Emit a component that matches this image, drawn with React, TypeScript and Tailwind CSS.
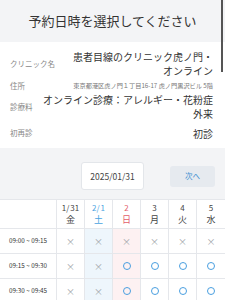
const font = { fontFamily: '"Noto Sans CJK JP", "Noto Sans", sans-serif' };

type Day = { m?: string; d: string; w: string; tone: 'plain' | 'sat' | 'sun' };

const days: Day[] = [
  { m: '1/', d: '31', w: '金', tone: 'plain' },
  { m: '2/', d: '1', w: '土', tone: 'sat' },
  { d: '2', w: '日', tone: 'sun' },
  { d: '3', w: '月', tone: 'plain' },
  { d: '4', w: '火', tone: 'plain' },
  { d: '5', w: '水', tone: 'plain' },
];

const slots = [
  { time: '09:00 ~ 09:15', marks: ['x', 'x', 'x', 'x', 'x', 'x'] },
  { time: '09:15 ~ 09:30', marks: ['x', 'x', 'o', 'o', 'o', 'o'] },
  { time: '09:30 ~ 09:45', marks: ['x', 'x', 'o', 'o', 'o', 'o'] },
];

const toneText = {
  plain: 'text-[#444]',
  sat: 'text-[#4aa3df]',
  sun: 'text-[#e35d6a]',
};

const toneBg = {
  plain: 'bg-white',
  sat: 'bg-[#eef6fc]',
  sun: 'bg-[#fdf1f2]',
};

const InfoRow = ({ label, h, children }: { label: string; h: string; children: React.ReactNode }) => (
  <div className={`flex items-center justify-between gap-1 ${h}`}>
    <span className="shrink-0 text-[7.5px] text-[#888]">{label}</span>
    <div className="text-right whitespace-nowrap">{children}</div>
  </div>
);

export default function App() {
  return (
    <div className="relative h-[300px] w-[225px] overflow-hidden bg-white" style={font}>
      {/* Header */}
      <div className="flex h-[42px] items-center justify-center bg-[#f3f4f6]">
        <h1 className="text-[13px] text-[#333]">予約日時を選択してください</h1>
      </div>

      {/* Clinic info */}
      <div className="px-[10px] pt-[5px] pb-[5px] pr-[12px]">
        <InfoRow label="クリニック名" h="h-[34px]">
          <p className="text-[10px] leading-[14px] text-[#333]">
            患者目線のクリニック虎ノ門・
            <br />
            オンライン
          </p>
        </InfoRow>
        <InfoRow label="住所" h="h-[10px]">
          <p className="text-[6.2px] text-[#777]">東京都港区虎ノ門１丁目16-17 虎ノ門黒沢ビル 5階</p>
        </InfoRow>
        <InfoRow label="診療料" h="h-[32px]">
          <p className="text-[10px] leading-[14px] text-[#333]">
            オンライン診療：アレルギー・花粉症
            <br />
            外来
          </p>
        </InfoRow>
        <InfoRow label="初再診" h="h-[20px]">
          <p className="text-[10px] text-[#333]">初診</p>
        </InfoRow>
      </div>

      {/* Date picker bar */}
      <div className="grid grid-cols-[1fr_auto_1fr] items-center bg-[#f3f4f6] pt-[14px] pb-[9px]">
        <div />
        <div className="flex h-[28px] w-[63px] items-center justify-center rounded-[3px] border border-[#e3e6ea] bg-white text-[8.5px] text-[#444]">
          2025/01/31
        </div>
        <button className="mr-[10px] flex h-[21px] w-[45px] items-center justify-center justify-self-end rounded-[3px] bg-[#e6eaef] text-[7.5px] text-[#3d8fd1]">
          次へ
        </button>
      </div>

      {/* Schedule table */}
      <div className="grid grid-cols-[57px_repeat(6,28px)] border-t border-[#e5e7eb]">
        <div className="h-[29px] border-r border-b border-[#e5e7eb]" />
        {days.map((day, i) => (
          <div
            key={i}
            className={`flex h-[29px] flex-col items-center justify-center border-b border-[#e5e7eb] text-[8px] leading-[12px] ${toneText[day.tone]} ${i < 5 ? 'border-r' : ''}`}
          >
            <span>
              {day.m}
              {day.m && <span className="ml-[1px]" />}
              {day.d}
            </span>
            <span className="text-[9px]">{day.w}</span>
          </div>
        ))}
        {slots.map((slot) => (
          <>
            <div
              key={slot.time}
              className="flex h-[25px] items-center justify-center border-r border-b border-[#e5e7eb] text-[6.3px] text-[#333]"
            >
              {slot.time}
            </div>
            {slot.marks.map((mark, i) => (
              <div
                key={slot.time + i}
                className={`flex h-[25px] items-center justify-center border-b border-[#e5e7eb] ${toneBg[days[i].tone]} ${i < 5 ? 'border-r' : ''}`}
              >
                {mark === 'x' ? (
                  <span className="text-[9px] leading-none text-[#a0a4a8]">×</span>
                ) : (
                  <span className="h-[8px] w-[8px] rounded-full border-[1.5px] border-[#4a9fe0]" />
                )}
              </div>
            ))}
          </>
        ))}
      </div>

      {/* scrollbar thumb */}
      <div className="absolute top-0 right-[2px] h-[72px] w-[2px] bg-[#555]" />
    </div>
  );
}
